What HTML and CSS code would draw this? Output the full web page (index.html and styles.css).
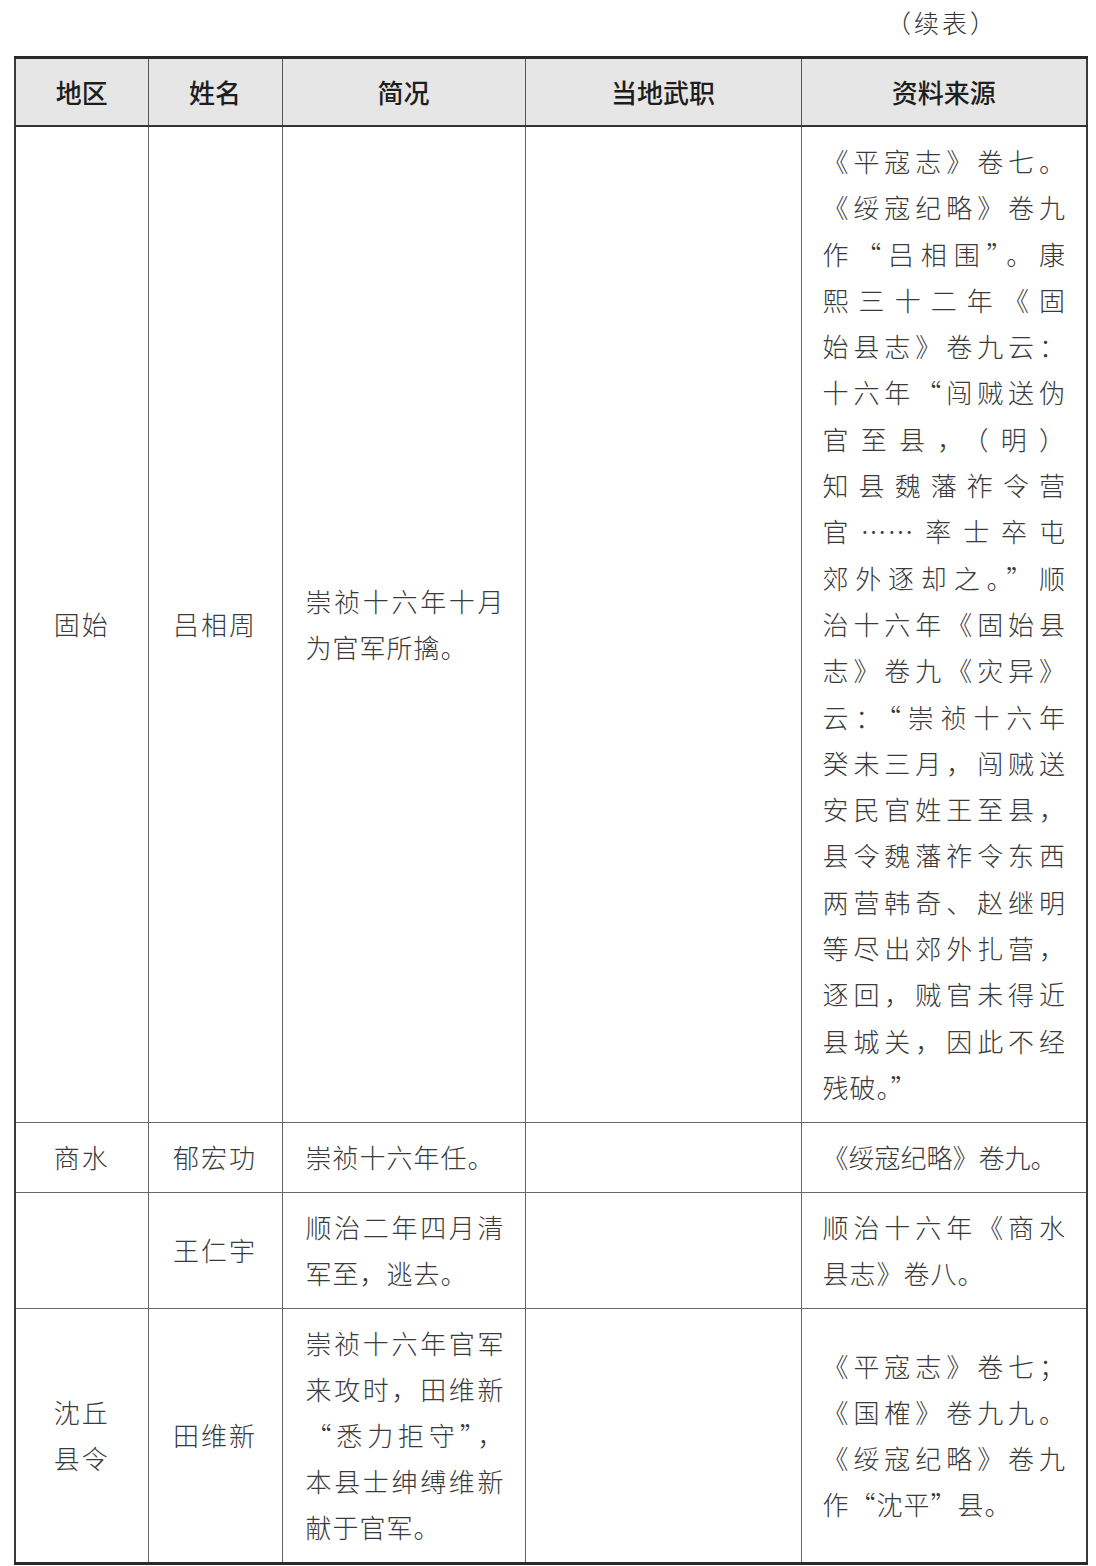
FILE: index.html
```html
<!DOCTYPE html>
<html lang="zh-CN">
<head>
<meta charset="utf-8">
<title>续表</title>
<link rel="stylesheet" href="styles.css">
</head>
<body>
<div class="page">
  <div class="caption">（续表）</div>
  <table class="tbl">
    <colgroup>
      <col class="c1"><col class="c2"><col class="c3"><col class="c4"><col class="c5">
    </colgroup>
    <thead>
      <tr><th>地区</th><th>姓名</th><th>简况</th><th>当地武职</th><th>资料来源</th></tr>
    </thead>
    <tbody>
      <tr class="long">
        <td class="ctr">固始</td>
        <td class="ctr">吕相周</td>
        <td class="txt"><span class="ln full">崇祯十六年十月</span><span class="ln">为官军所擒。</span></td>
        <td></td>
        <td class="src">
          <span class="ln full">《平寇志》卷七。</span>
          <span class="ln full">《绥寇纪略》卷九</span>
          <span class="ln full">作“吕相围”。康</span>
          <span class="ln full">熙三十二年《固</span>
          <span class="ln full">始县志》卷九云：</span>
          <span class="ln full">十六年“闯贼送伪</span>
          <span class="ln full">官至县，（明）</span>
          <span class="ln full">知县魏藩祚令营</span>
          <span class="ln full">官……率士卒屯</span>
          <span class="ln full">郊外逐却之。”顺</span>
          <span class="ln full">治十六年《固始县</span>
          <span class="ln full">志》卷九《灾异》</span>
          <span class="ln full">云：“崇祯十六年</span>
          <span class="ln full">癸未三月，闯贼送</span>
          <span class="ln full">安民官姓王至县，</span>
          <span class="ln full">县令魏藩祚令东西</span>
          <span class="ln full">两营韩奇、赵继明</span>
          <span class="ln full">等尽出郊外扎营，</span>
          <span class="ln full">逐回，贼官未得近</span>
          <span class="ln full">县城关，因此不经</span>
          <span class="ln">残破。”</span>
        </td>
      </tr>
      <tr>
        <td class="ctr">商水</td>
        <td class="ctr">郁宏功</td>
        <td class="txt"><span class="ln">崇祯十六年任。</span></td>
        <td></td>
        <td class="src"><span class="ln nw">《绥寇纪略》卷九。</span></td>
      </tr>
      <tr>
        <td class="ctr"></td>
        <td class="ctr">王仁宇</td>
        <td class="txt"><span class="ln full">顺治二年四月清</span><span class="ln">军至，逃去。</span></td>
        <td></td>
        <td class="src"><span class="ln full">顺治十六年《商水</span><span class="ln">县志》卷八。</span></td>
      </tr>
      <tr>
        <td class="ctr"><span class="ln">沈丘</span><span class="ln">县令</span></td>
        <td class="ctr">田维新</td>
        <td class="txt">
          <span class="ln full">崇祯十六年官军</span>
          <span class="ln full">来攻时，田维新</span>
          <span class="ln full">“悉力拒守”，</span>
          <span class="ln full">本县士绅缚维新</span>
          <span class="ln">献于官军。</span>
        </td>
        <td></td>
        <td class="src">
          <span class="ln full">《平寇志》卷七；</span>
          <span class="ln full">《国榷》卷九九。</span>
          <span class="ln full">《绥寇纪略》卷九</span>
          <span class="ln">作“沈平”县。</span>
        </td>
      </tr>
    </tbody>
  </table>
</div>
</body>
</html>
```

FILE: styles.css
```css
html, body {
  margin: 0;
  padding: 0;
  background: #ffffff;
}

body {
  font-family: "Noto Sans CJK SC", "Noto Sans", sans-serif;
  color: #3a3a3a;
}

.page {
  width: 1072px;
  padding: 0 10px 0 14px;
}

.caption {
  height: 56px;
  box-sizing: border-box;
  padding-top: 6px;
  padding-right: 88px;
  text-align: right;
  font-size: 25px;
  line-height: 32px;
  letter-spacing: 3px;
  font-weight: 300;
  color: #333;
}

.tbl {
  width: 1072px;
  table-layout: fixed;
  border-collapse: collapse;
  border-top: 3px solid #2a2a2a;
  border-bottom: 3px solid #2a2a2a;
  border-left: 2px solid #3a3a3a;
  border-right: 2px solid #3a3a3a;
}

.c1 { width: 133px; }
.c2 { width: 134px; }
.c3 { width: 243px; }
.c4 { width: 276px; }
.c5 { width: 286px; }

.tbl th {
  background: #e6e6e6;
  font-size: 26px;
  font-weight: 500;
  color: #1e1e1e;
  height: 66px;
  padding: 0;
  line-height: 30px;
  text-align: center;
  vertical-align: middle;
  border-left: 1px solid #555;
  border-right: 1px solid #555;
  border-bottom: 2px solid #333;
}

.tbl td {
  border: 1px solid #666;
  padding: 11px 0 12px;
  font-size: 26px;
  line-height: 46px;
  font-weight: 300;
  vertical-align: middle;
}

.tbl tr.long td {
  line-height: 46.3px;
}

.tbl td.ctr {
  text-align: center;
  letter-spacing: 2px;
}

.tbl td.ctr .ln {
  text-align: center;
}

.tbl td.txt {
  padding-left: 23px;
  padding-right: 20px;
  letter-spacing: 1px;
}

.tbl td.src {
  padding-left: 21px;
  padding-right: 20px;
  letter-spacing: 1px;
}

.ln {
  display: block;
  text-align: left;
}

.ln.full {
  text-align: justify;
  text-align-last: justify;
}

.ln.nw {
  white-space: nowrap;
  letter-spacing: 0;
}
```
